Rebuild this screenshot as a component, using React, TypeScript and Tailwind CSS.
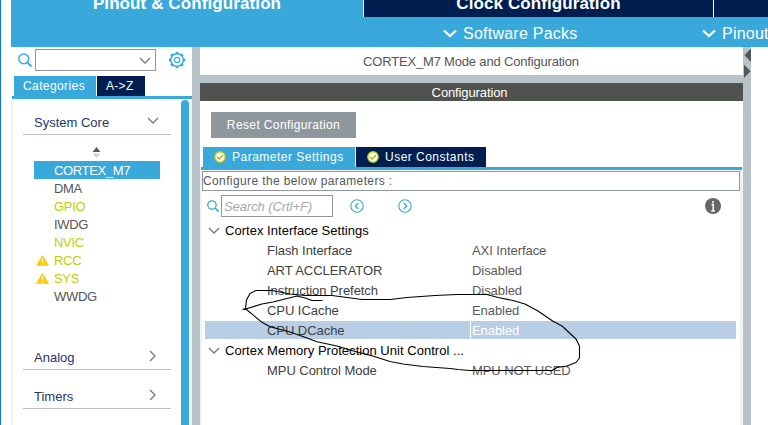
import React from "react";

const SANS = "font-['Liberation_Sans',Arial,sans-serif]";

function Chevron({ className = "", d = "M1 1l5 5 5-5", w = 12, h = 7, sw = 1.3 }: { className?: string; d?: string; w?: number; h?: number; sw?: number }) {
  return (
    <svg className={`shrink-0 ${className}`} width={w} height={h} viewBox={`0 0 ${w} ${h}`} fill="none" stroke="currentColor" strokeWidth={sw}>
      <path d={d} />
    </svg>
  );
}

function SearchIcon({ size, className = "" }: { size: number; className?: string }) {
  return (
    <svg className={`shrink-0 text-[#39a9dc] ${className}`} width={size} height={size} viewBox="0 0 14 14" fill="none" stroke="currentColor" strokeWidth="1.5">
      <circle cx="5.8" cy="5.8" r="4.9" />
      <path d="M9.3 9.3l4.2 4.2" strokeWidth="1.9" />
    </svg>
  );
}

function Gear() {
  const teeth = [0, 45, 90, 135, 180, 225, 270, 315];
  return (
    <svg className="ml-3 mt-[2px] shrink-0" width="18" height="18" viewBox="0 0 18 18" fill="none" stroke="#39a9dc" strokeWidth="1.2">
      <circle cx="9" cy="9" r="2.7" />
      <circle cx="9" cy="9" r="6.3" strokeWidth="1.5" />
      {teeth.map((a) => (
        <path key={a} transform={`rotate(${a} 9 9)`} d="M9 .9V2.600" strokeWidth="2.800" />
      ))}
    </svg>
  );
}

function Check() {
  return (
    <svg className="shrink-0" width="12" height="12" viewBox="0 0 12 12" fill="none">
      <circle cx="6" cy="6" r="5.2" fill="#fff" stroke="#bccf00" strokeWidth="1.4" />
      <path d="M3.2 5.9l2.1 2.1 3.6-3.7" stroke="#a9b900" strokeWidth="1.4" />
    </svg>
  );
}

function Warning() {
  return (
    <svg className="mr-[5px] shrink-0" width="13" height="11" viewBox="0 0 13 11">
      <path d="M6.5.6L12.3 10.3H.7z" fill="#ffcd05" stroke="#ffcd05" strokeWidth="1" strokeLinejoin="round" />
      <path d="M6.5 3v4M6.5 8v1.4" stroke="#fff" strokeWidth="1.2" />
    </svg>
  );
}

function Circled({ d, className }: { d: string; className: string }) {
  return (
    <svg className={`shrink-0 ${className}`} width="14" height="14" viewBox="0 0 14 14" fill="none" stroke="#39a9dc">
      <circle cx="7" cy="7" r="6.2" strokeWidth="1.1" />
      <path d={d} strokeWidth="1.3" />
    </svg>
  );
}

const peripherals = [
  { name: "DMA", color: "text-[#55565a]" },
  { name: "GPIO", color: "text-[#bccf00]" },
  { name: "IWDG", color: "text-[#55565a]" },
  { name: "NVIC", color: "text-[#bccf00]" },
  { name: "RCC", color: "text-[#bccf00]", warn: true },
  { name: "SYS", color: "text-[#bccf00]", warn: true },
  { name: "WWDG", color: "text-[#55565a]" },
];

const params = [
  ["Flash Interface", "AXI Interface"],
  ["ART ACCLERATOR", "Disabled"],
  ["Instruction Prefetch", "Disabled"],
  ["CPU ICache", "Enabled"],
];

function Category({ name, open = false, className = "" }: { name: string; open?: boolean; className?: string }) {
  return (
    <div className={`mx-[10px] flex justify-between border-b border-[#b7c3c9] pl-[11px] text-[#26346b] ${className}`}>
      <span className={open ? "leading-[18px]" : "leading-[16px]"}>{name}</span>
      {open ? (
        <Chevron className="mr-3 mt-[3px] text-[#777]" />
      ) : (
        <Chevron className="mr-[14px] text-[#777]" w={8} h={12} d="M1 1l5 5-5 5" />
      )}
    </div>
  );
}

function Param({ name, value }: { name: string; value: string }) {
  return (
    <div className="flex h-5 items-center pt-[2px]">
      <span className="w-[205px] tracking-[-0.05px] text-[#404040]">{name}</span>
      <span className="tracking-[-0.07px] text-[#5a5a5a]">{value}</span>
    </div>
  );
}

function Group({ name }: { name: string }) {
  return (
    <div className="flex h-5 items-center pl-[6px] text-black">
      <Chevron className="mr-[5px] text-[#777]" />
      <span className="pt-[2px] tracking-[0.03px]">{name}</span>
    </div>
  );
}

function Header() {
  return (
    <header className="h-[47px] shrink-0 overflow-hidden bg-[#39a9dc] text-white">
      <div className="flex h-[17px] text-[17px] font-bold leading-[20px] tracking-[0.1px]">
        <div className="flex w-[353px] justify-center border-r border-white">
          <span className="-mt-[6px]">Pinout &amp; Configuration</span>
        </div>
        <div className="flex w-[350px] justify-center border-r border-white bg-[#001f50]">
          <span className="-mt-[6px]">Clock Configuration</span>
        </div>
        <div className="flex-1 bg-[#001f50]" />
      </div>
      <div className="flex h-[30px] items-center whitespace-nowrap pl-[432px] pt-[2px] text-[16px] tracking-[0.24px]">
        <Chevron w={14} h={9} d="M1 1.5l6 5.5 6-5.5" sw={2.2} className="mr-[6px]" />
        <span className="w-[240px] shrink-0 pt-px">Software Packs</span>
        <Chevron w={14} h={9} d="M1 1.5l6 5.5 6-5.5" sw={2.2} className="-ml-px mr-[6px]" />
        <span className="pt-px">Pinout</span>
      </div>
    </header>
  );
}

function Sidebar() {
  return (
    <aside className="flex w-[181px] shrink-0 flex-col">
      <div className="flex h-[29px] pl-[7px] pt-[2px]">
        <SearchIcon size={14} className="mt-1" />
        <div className="ml-[3px] flex h-[22px] w-[121px] items-center justify-end border border-[#8f979e] pr-[4px] text-[#777]">
          <Chevron />
        </div>
        <Gear />
      </div>
      <div className="flex h-5 gap-px pl-[3px] text-[12px] text-white">
        <div className="w-[82px] bg-[#39a9dc] pl-[9px] leading-[20px] tracking-[0.4px]">Categories</div>
        <div className="w-[48px] bg-[#001f50] pl-[9px] leading-[20px] tracking-[0.3px]">A-&gt;Z</div>
      </div>
      <div className="ml-px h-[3px] bg-[#39a9dc]" />
      <div className="flex min-h-0 flex-1 border-l-2 border-[#f0f0f0]">
        <div className="w-[168px]">
          <Category name="System Core" open className="mt-[15px] h-[21px]" />
          <div className="flex h-[26px] items-end justify-center pb-[3px]">
            <svg className="mr-[2px]" width="9" height="11" viewBox="0 0 9 11">
              <path d="M4.5 0L8.500 5H.5z" fill="#5a5a5a" />
              <path d="M4.5 11L8.500 6.400H.5z" fill="#d0d0d0" />
            </svg>
          </div>
          <div className="ml-[21px] h-[18px] w-[126px] bg-[#39a9dc] pl-5 leading-[19px] tracking-[-0.35px] text-white">CORTEX_M7</div>
          {peripherals.map((p) => (
            <div key={p.name} className={`flex h-[18px] items-center justify-start pt-px tracking-[-0.3px] ${p.warn ? "pl-[23px]" : "pl-[41px]"} ${p.color}`}>
              {p.warn && <Warning />}
              {p.name}
            </div>
          ))}
          <Category name="Analog" className="mt-[45px] h-[20px]" />
          <Category name="Timers" className="mt-[19px] h-[20px]" />
        </div>
        <div className="mt-px w-2 rounded-t-[4px] bg-[#39a9dc]" />
        <div className="flex-1 border-r-2 border-[#f0f0f0]" />
      </div>
    </aside>
  );
}

function Configuration() {
  return (
    <main className="flex w-[543px] shrink-0 flex-col whitespace-nowrap">
      <div className="h-[28px] pr-px text-center leading-[30px] tracking-[-0.18px] text-[#55565a]">CORTEX_M7 Mode and Configuration</div>
      <div className="h-2 bg-[#b7c3c9]" />
      <div className="h-[18px] bg-[#50524f] pr-[4px] text-center leading-[19px] tracking-[-0.12px] text-white">Configuration</div>
      <button className="ml-[11px] mt-[11px] h-[26px] w-[145px] bg-[#8f979e] text-[12px] tracking-[0.38px] text-white">Reset Configuration</button>
      <div className="mt-[9px] flex h-5 gap-px pl-[3px] text-[12px] text-white">
        <div className="flex w-[152px] items-center bg-[#39a9dc] pb-px pl-[11px] tracking-[0.5px]">
          <Check />
          <span className="ml-[6px]">Parameter Settings</span>
        </div>
        <div className="flex w-[130px] items-center bg-[#001f50] pb-px pl-[11px] tracking-[0.48px]">
          <Check />
          <span className="ml-[6px]">User Constants</span>
        </div>
      </div>
      <div className="ml-px mr-px h-[3px] bg-[#39a9dc]" />
      <div className="flex-1 border-l-2 border-r-[3px] border-[#f0f3f4] pt-px">
        <div className="h-5 border border-[#8f979e] text-[12px] leading-[19px] tracking-[0.38px] text-[#55565a]">Configure the below parameters :</div>
        <div className="flex h-[29px] items-start pl-[5px] pt-1">
          <SearchIcon size={12} className="mt-[5px]" />
          <div className="ml-[2px] h-[22px] w-[112px] border border-[#8f979e] pl-[2px] italic leading-[21px] tracking-[-0.08px] text-[#a8a8a8]">Search (Crtl+F)</div>
          <Circled className="ml-[17px] mt-1" d="M8.3 4L5.3 7l3 3" />
          <Circled className="ml-[34px] mt-1" d="M5.7 4l3 3-3 3" />
          <svg className="ml-[293px] mt-[3px]" width="16" height="16" viewBox="0 0 16 16">
            <circle cx="8" cy="8" r="8" fill="#666" />
            <path d="M8 3v2M6.500 6.600h1.700v6.400M6.300 13h3.600" fill="none" stroke="#fff" strokeWidth="1.5" />
          </svg>
        </div>
        <div className="leading-[18px]">
          <Group name="Cortex Interface Settings" />
          <div className="pl-[65px]">
            {params.map(([name, value]) => (
              <Param key={name} name={name} value={value} />
            ))}
          </div>
          <div className="flex h-5 gap-px pb-px pl-[3px] pr-1 pt-px leading-[20px]">
            <div className="w-[265px] bg-[#b8cee5] pl-[62px] tracking-[-0.05px] text-[#404040]">CPU DCache</div>
            <div className="flex-1 bg-[#b8cee5] pl-px tracking-[-0.07px] text-white">Enabled</div>
          </div>
          <Group name="Cortex Memory Protection Unit Control ..." />
          <div className="pl-[65px]">
            <Param name="MPU Control Mode" value="MPU NOT USED" />
          </div>
        </div>
      </div>
    </main>
  );
}

function Scribble() {
  return (
    <svg className="pointer-events-none absolute left-0 top-0" width="768" height="425" fill="none" stroke="#000" strokeWidth="1.1" strokeLinejoin="round">
      <path d="M242.5 309.5L245.5 308.5L246.5 300L250 293.5L256 290.5H272L290 294L305 295.5H332L362 299.5H390L407 297.5L435 295.5L457 294.5H487L498 297.5L513 300.5L525 304L538 311L553 321.3L562 326L576 339L579.5 346V358L576 362.5L567 366L557 367.5L552 370.5H470L458 369.5L450 368.5L423 366.5L403 364L390 361.5L372 355.7L357 352L337 346L317 341.7L305 337.3L290 332L270 326.7L262 322.3L246.5 309.5L244 309.5L262 304L273 302L297 296L305 298L312 300.5H322.5" />
    </svg>
  );
}

export default function App() {
  return (
    <div className={`relative flex h-[425px] w-[768px] overflow-hidden bg-white text-[13px] ${SANS}`}>
      <div className="w-px shrink-0 bg-[#0f78d7]" />
      <div className="ml-[10px] flex min-w-0 flex-1 flex-col">
        <Header />
        <div className="flex min-h-0 flex-1">
          <Sidebar />
          <div className="w-2 shrink-0 bg-[#b7c3c9]" />
          <Configuration />
          <div className="w-2 shrink-0 bg-[#b7c3c9] pt-px">
            <svg width="8" height="32" viewBox="0 0 8 32" fill="#55565a">
              <path d="M8 .5V14L1.5 7.2zM1 16.500V30L7.500 23.200z" />
            </svg>
          </div>
        </div>
      </div>
      <Scribble />
    </div>
  );
}
